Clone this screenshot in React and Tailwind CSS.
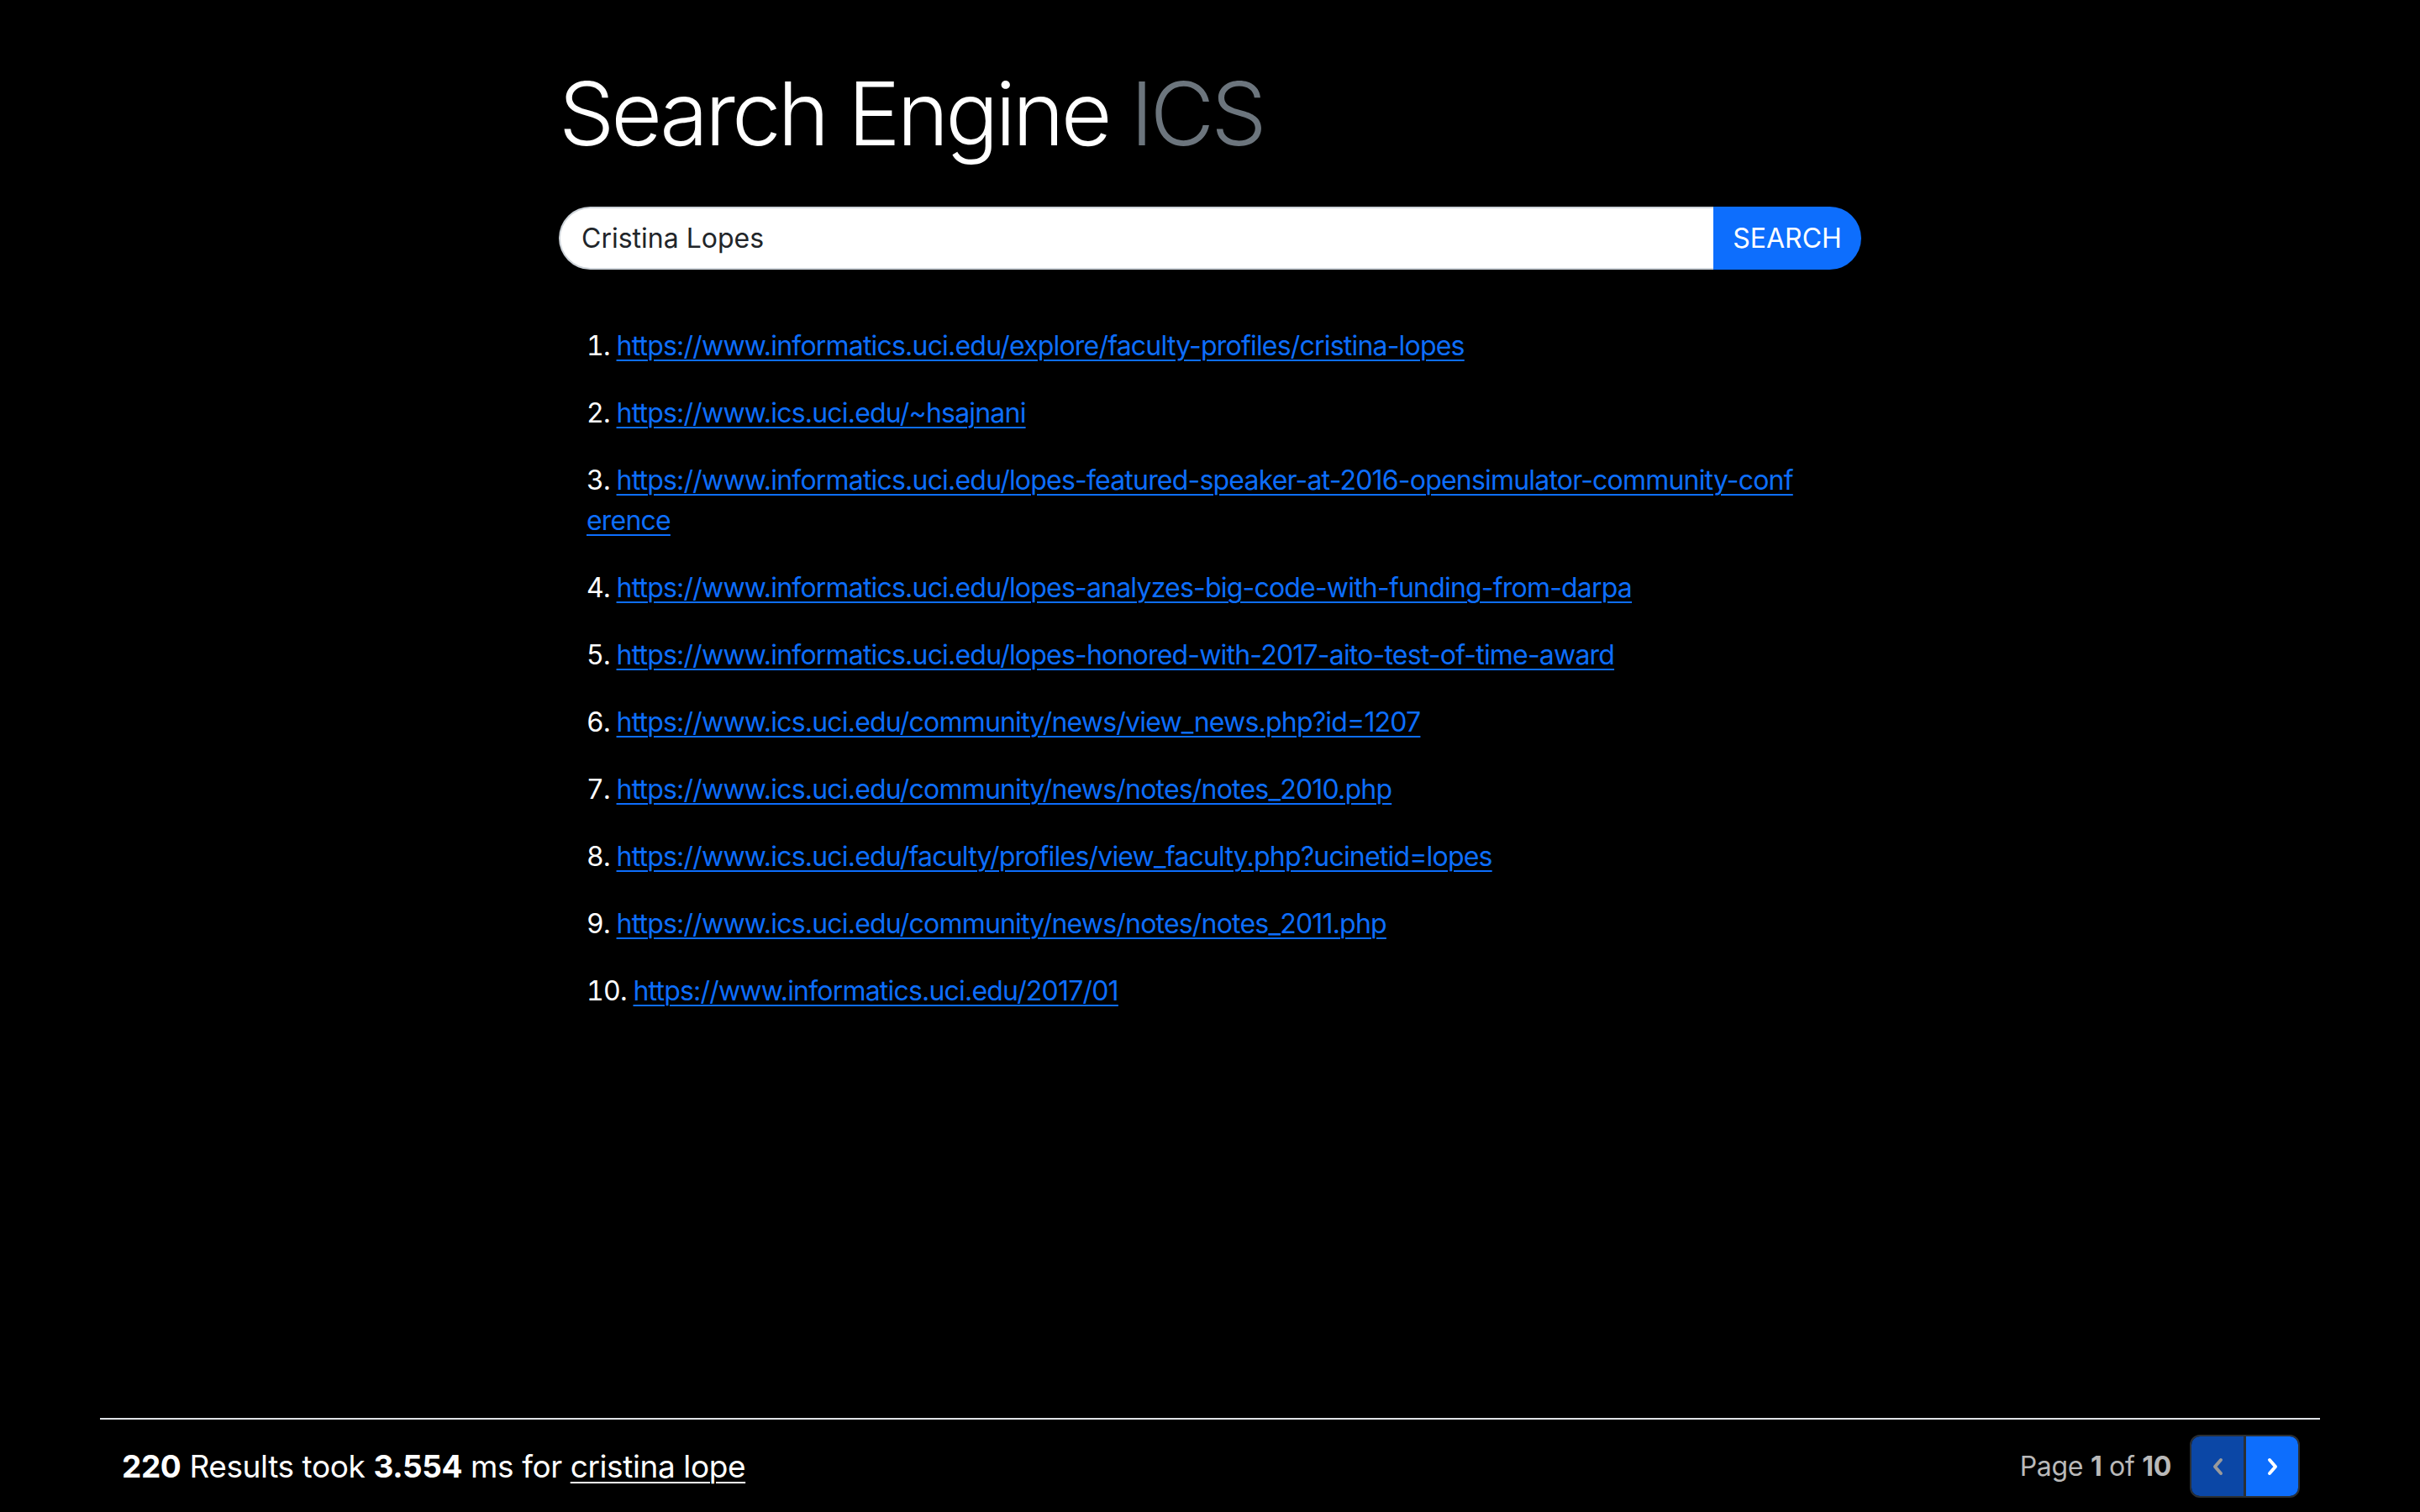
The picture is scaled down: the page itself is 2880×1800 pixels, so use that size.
import React from 'react'

const RESULTS = [
  'https://www.informatics.uci.edu/explore/faculty-profiles/cristina-lopes',
  'https://www.ics.uci.edu/~hsajnani',
  'https://www.informatics.uci.edu/lopes-featured-speaker-at-2016-opensimulator-community-conference',
  'https://www.informatics.uci.edu/lopes-analyzes-big-code-with-funding-from-darpa',
  'https://www.informatics.uci.edu/lopes-honored-with-2017-aito-test-of-time-award',
  'https://www.ics.uci.edu/community/news/view_news.php?id=1207',
  'https://www.ics.uci.edu/community/news/notes/notes_2010.php',
  'https://www.ics.uci.edu/faculty/profiles/view_faculty.php?ucinetid=lopes',
  'https://www.ics.uci.edu/community/news/notes/notes_2011.php',
  'https://www.informatics.uci.edu/2017/01',
]

function Chevron({ dir, color }) {
  const d = dir === 'left' ? 'M11 3 L4 11 L11 19' : 'M4 3 L11 11 L4 19'
  return (
    <svg width="15" height="22" viewBox="0 0 15 22" fill="none">
      <path d={d} stroke={color} strokeWidth="4" strokeLinecap="round" strokeLinejoin="round" />
    </svg>
  )
}

export default function App() {
  return (
    <div className="flex min-h-[1800px] flex-col bg-black font-['Inter','Liberation_Sans',sans-serif] text-white">
      <main className="mx-auto w-[1550px] pt-[72px]">
        <h1 className="text-[105px] font-light leading-[1.2] tracking-[-4px]">
          Search Engine <span className="text-[#6c757d]">ICS</span>
        </h1>

        <form className="mt-[48px] flex h-[75px]" onSubmit={(e) => e.preventDefault()}>
          <input
            type="text"
            defaultValue="Cristina Lopes"
            className="h-full flex-1 rounded-l-full border-2 border-r-0 border-[#ced4da] bg-white pl-[25px] text-[32px] text-[#212529] outline-none"
          />
          <button
            type="submit"
            className="h-full w-[176px] rounded-r-full bg-[#0d6efd] text-[32px] text-white"
          >
            SEARCH
          </button>
        </form>

        <ol className="mt-[67px] list-inside list-decimal pl-[33px] pr-[72px] text-[32px] leading-[48px] tracking-[-0.8px]">
          {RESULTS.map((url) => (
            <li key={url} className="mb-[32px] break-all">
              <a href={url} className="text-[#0d6efd] underline decoration-2 underline-offset-[5px]">
                {url}
              </a>
            </li>
          ))}
        </ol>
      </main>

      <footer className="mx-[119px] mt-auto flex items-center justify-between border-t-2 border-[#dee2e6] pb-[17px] pl-[26px] pr-[24px] pt-[18px]">
        <div className="text-[37px] tracking-[-0.4px]">
          <b className="font-bold">220</b> Results took <b className="font-bold">3.554</b> ms for{' '}
          <a href="#" className="underline decoration-2 underline-offset-[5px]">cristina lope</a>
        </div>
        <div className="flex items-center gap-[22px]">
          <span className="text-[32px] tracking-[-0.3px] text-[#b9b9b9]">
            Page <b className="font-bold">1</b> of <b className="font-bold">10</b>
          </span>
          <div className="flex h-[75px] overflow-hidden rounded-[12px] border-2 border-[#2b2f33]">
            <button className="flex w-[62px] items-center justify-center bg-[#0b47a6]">
              <Chevron dir="left" color="#9a9a9a" />
            </button>
            <div className="w-[3px] bg-[#2b2f33]" />
            <button className="flex w-[62px] items-center justify-center bg-[#0d6efd]">
              <Chevron dir="right" color="#ffffff" />
            </button>
          </div>
        </div>
      </footer>
    </div>
  )
}
